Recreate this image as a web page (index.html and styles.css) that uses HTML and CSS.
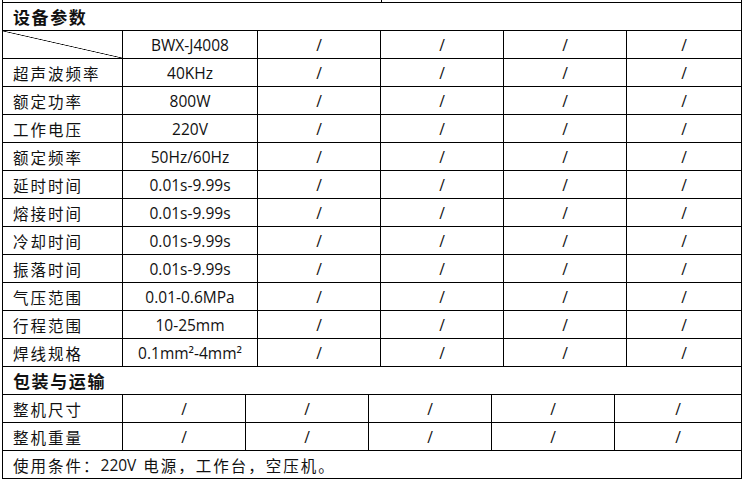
FILE: index.html
```html
<!DOCTYPE html>
<html lang="zh">
<head>
<meta charset="utf-8">
<link rel="stylesheet" href="styles.css">
</head>
<body>
<div class="strip"><div class="s1"></div><div class="s2"></div></div>
<div class="sheet">
  <div class="row"><div class="cell title full">设备参数</div></div>
  <div class="row">
    <div class="cell w1 diag"></div>
    <div class="cell w2 val">BWX-J4008</div>
    <div class="cell w3 val">/</div><div class="cell w3 val">/</div><div class="cell w3 val">/</div><div class="cell w6 val">/</div>
  </div>
  <div class="row">
    <div class="cell w1 lab">超声波频率</div>
    <div class="cell w2 val">40KHz</div>
    <div class="cell w3 val">/</div><div class="cell w3 val">/</div><div class="cell w3 val">/</div><div class="cell w6 val">/</div>
  </div>
  <div class="row">
    <div class="cell w1 lab">额定功率</div>
    <div class="cell w2 val">800W</div>
    <div class="cell w3 val">/</div><div class="cell w3 val">/</div><div class="cell w3 val">/</div><div class="cell w6 val">/</div>
  </div>
  <div class="row">
    <div class="cell w1 lab">工作电压</div>
    <div class="cell w2 val">220V</div>
    <div class="cell w3 val">/</div><div class="cell w3 val">/</div><div class="cell w3 val">/</div><div class="cell w6 val">/</div>
  </div>
  <div class="row">
    <div class="cell w1 lab">额定频率</div>
    <div class="cell w2 val">50Hz/60Hz</div>
    <div class="cell w3 val">/</div><div class="cell w3 val">/</div><div class="cell w3 val">/</div><div class="cell w6 val">/</div>
  </div>
  <div class="row">
    <div class="cell w1 lab">延时时间</div>
    <div class="cell w2 val">0.01s-9.99s</div>
    <div class="cell w3 val">/</div><div class="cell w3 val">/</div><div class="cell w3 val">/</div><div class="cell w6 val">/</div>
  </div>
  <div class="row">
    <div class="cell w1 lab">熔接时间</div>
    <div class="cell w2 val">0.01s-9.99s</div>
    <div class="cell w3 val">/</div><div class="cell w3 val">/</div><div class="cell w3 val">/</div><div class="cell w6 val">/</div>
  </div>
  <div class="row">
    <div class="cell w1 lab">冷却时间</div>
    <div class="cell w2 val">0.01s-9.99s</div>
    <div class="cell w3 val">/</div><div class="cell w3 val">/</div><div class="cell w3 val">/</div><div class="cell w6 val">/</div>
  </div>
  <div class="row">
    <div class="cell w1 lab">振落时间</div>
    <div class="cell w2 val">0.01s-9.99s</div>
    <div class="cell w3 val">/</div><div class="cell w3 val">/</div><div class="cell w3 val">/</div><div class="cell w6 val">/</div>
  </div>
  <div class="row">
    <div class="cell w1 lab">气压范围</div>
    <div class="cell w2 val">0.01-0.6MPa</div>
    <div class="cell w3 val">/</div><div class="cell w3 val">/</div><div class="cell w3 val">/</div><div class="cell w6 val">/</div>
  </div>
  <div class="row">
    <div class="cell w1 lab">行程范围</div>
    <div class="cell w2 val">10-25mm</div>
    <div class="cell w3 val">/</div><div class="cell w3 val">/</div><div class="cell w3 val">/</div><div class="cell w6 val">/</div>
  </div>
  <div class="row">
    <div class="cell w1 lab">焊线规格</div>
    <div class="cell w2 val">0.1mm²-4mm²</div>
    <div class="cell w3 val">/</div><div class="cell w3 val">/</div><div class="cell w3 val">/</div><div class="cell w6 val">/</div>
  </div>
  <div class="row"><div class="cell title full">包装与运输</div></div>
  <div class="row">
    <div class="cell w1 lab">整机尺寸</div>
    <div class="cell b2 val">/</div><div class="cell b2 val">/</div><div class="cell b2 val">/</div><div class="cell b2 val">/</div><div class="cell b6 val">/</div>
  </div>
  <div class="row">
    <div class="cell w1 lab">整机重量</div>
    <div class="cell b2 val">/</div><div class="cell b2 val">/</div><div class="cell b2 val">/</div><div class="cell b2 val">/</div><div class="cell b6 val">/</div>
  </div>
  <div class="row"><div class="cell note full"><span class="cjk">使用条件：</span><span class="lat">220V</span><span class="cjk">电源，工作台，空压机。</span></div></div>
</div>
</body>
</html>
```
FILE: styles.css
```css
html, body {
  margin: 0;
  padding: 0;
  background: #fff;
}
body {
  font-family: "Open Sans", "Noto Sans CJK SC", sans-serif;
  color: #111;
}
.strip {
  display: flex;
  height: 2px;
  margin-left: 2px;
  width: 740px;
  box-sizing: border-box;
  border-left: 1px solid #000;
  border-right: 1px solid #000;
}
.s1 {
  width: 378px;
  border-right: 1px solid #000;
}
.sheet {
  margin-left: 2px;
  width: 740px;
  box-sizing: border-box;
  border-left: 1px solid #000;
  border-top: 1px solid #000;
}
.row {
  display: flex;
  height: 28px;
  box-sizing: border-box;
  border-bottom: 1px solid #000;
}
.cell {
  box-sizing: border-box;
  border-right: 1px solid #000;
  display: flex;
  align-items: center;
  height: 100%;
  white-space: nowrap;
}
.full { width: 739px; }
.w1 { width: 120px; }
.w2 { width: 135px; }
.w3 { width: 123px; }
.w6 { width: 115px; }
.b2 { width: 123px; }
.b6 { width: 127px; }
.title {
  padding-left: 10px;
  font-family: "Noto Sans CJK SC", sans-serif;
  font-weight: 700;
  font-size: 17px;
  letter-spacing: 1.6px;
  padding-bottom: 1px;
}
.lab {
  padding-left: 10px;
  font-family: "Noto Sans CJK SC", sans-serif;
  font-size: 15.5px;
  letter-spacing: 2px;
  font-weight: 400;
}
.note {
  padding-left: 10px;
  font-size: 15.5px;
}
.note .cjk {
  font-family: "Noto Sans CJK SC", sans-serif;
  letter-spacing: 2px;
}
.note .lat {
  font-family: "Open Sans", sans-serif;
  font-size: 15.5px;
  margin-right: 7px;
}
.val {
  justify-content: center;
  font-size: 15.5px;
}
.diag {
  background: linear-gradient(to top right, transparent calc(50% - 0.7px), #000 50%, transparent calc(50% + 0.7px));
}
```
